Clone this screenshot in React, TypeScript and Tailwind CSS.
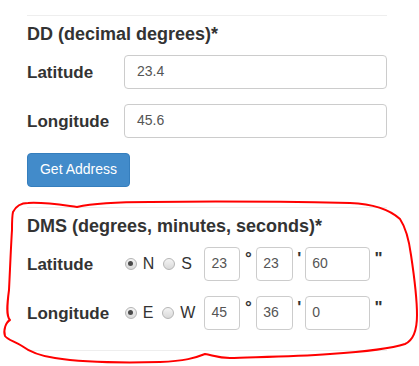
const font = { fontFamily: '"Liberation Sans", Arial, sans-serif' }

function Radio({ checked, label }: { checked?: boolean; label: string }) {
  return (
    <label className="flex items-center gap-[6px]">
      <span className="flex h-[12px] w-[12px] items-center justify-center rounded-full border border-[#b5b5b5] bg-gradient-to-b from-[#f4f4f4] to-[#d9d9d9]">
        {checked && <span className="h-[5px] w-[5px] rounded-full bg-[#4a4a4a]" />}
      </span>
      <span className="text-[16px] leading-none text-[#333]">{label}</span>
    </label>
  )
}

function Box({ value, w }: { value: string; w: string }) {
  return (
    <div
      className={`${w} flex h-[34px] items-center rounded-[4px] border border-[#ccc] bg-white px-[6px] text-[14px] text-[#555]`}
    >
      {value}
    </div>
  )
}

function Mark({ ch, w }: { ch: string; w: string }) {
  return (
    <span className={`${w} self-start pt-[3px] text-center text-[17px] font-bold leading-none text-[#333]`}>
      {ch}
    </span>
  )
}

function DmsRow({
  label,
  a,
  b,
  vals,
}: {
  label: string
  a: string
  b: string
  vals: [string, string, string]
}) {
  return (
    <div className="flex items-center">
      <span className="w-[97px] pt-[3px] text-[17px] font-bold text-[#333]">{label}</span>
      <div className="flex w-[81px] items-center gap-[9px] pl-[1px]">
        <Radio checked label={a} />
        <Radio label={b} />
      </div>
      <Box value={vals[0]} w="w-[36px]" />
      <Mark ch="°" w="w-[16px]" />
      <Box value={vals[1]} w="w-[37px]" />
      <Mark ch="'" w="w-[12px]" />
      <Box value={vals[2]} w="w-[65px]" />
      <Mark ch={'"'} w="w-[17px]" />
    </div>
  )
}

function DdRow({ label, value }: { label: string; value: string }) {
  return (
    <div className="flex items-center">
      <span className="w-[97px] pt-[1px] text-[17px] font-bold text-[#333]">{label}</span>
      <div className="flex h-[34px] w-[263px] items-center rounded-[4px] border border-[#ccc] bg-white px-[12px] text-[14px] text-[#555]">
        {value}
      </div>
    </div>
  )
}

export default function App() {
  return (
    <div className="relative h-[366px] w-[419px] overflow-hidden bg-white" style={font}>
      <div className="w-[387px] pl-[27px] pt-[15px]">
        <div className="border-t border-[#eee]" />
        <h4 className="mt-[9px] text-[18px] font-bold leading-[1.1] text-[#333]">DD (decimal degrees)*</h4>
        <div className="mt-[10px] flex flex-col gap-[15px]">
          <DdRow label="Latitude" value="23.4" />
          <DdRow label="Longitude" value="45.6" />
        </div>
        <button className="mt-[15px] h-[34px] w-[103px] rounded-[4px] border border-[#357ebd] bg-[#428bca] text-[14px] text-white">
          Get Address
        </button>
        <div className="mt-[20px] border-t border-[#eee]" />
        <h4 className="mt-[9px] text-[18px] font-bold leading-[1.1] text-[#333]">
          DMS (degrees, minutes, seconds)*
        </h4>
        <div className="mt-[10px] flex flex-col gap-[15px]">
          <DmsRow label="Latitude" a="N" b="S" vals={['23', '23', '60']} />
          <DmsRow label="Longitude" a="E" b="W" vals={['45', '36', '0']} />
        </div>
        <div className="mt-[20px] border-t border-[#eee]" />
      </div>
      <svg className="pointer-events-none absolute inset-0" width="419" height="366" viewBox="0 0 419 366">
        <path
          d="M13 212 C16 206 20 203 28 203 C45 202 62 205 77 207 C90 204 110 202 150 202 C220 201 300 202 350 203 C375 204 390 210 400 219 C406 228 409 240 411 255 C414 275 417 295 417 315 C417 330 414 340 405 344 C390 349 360 352 330 354 C290 357 250 357 230 358 C218 358 212 355 205 354 C195 358 185 361 160 362 C120 363 80 362 55 358 C40 356 30 352 22 346 C14 341 8 340 5 336 C3 330 6 322 10 320 C6 316 7 305 9 290 C10 270 11 245 12 230 C12 222 12 216 13 212 Z"
          fill="none"
          stroke="#f00"
          strokeWidth="2"
          strokeLinejoin="round"
        />
      </svg>
    </div>
  )
}
